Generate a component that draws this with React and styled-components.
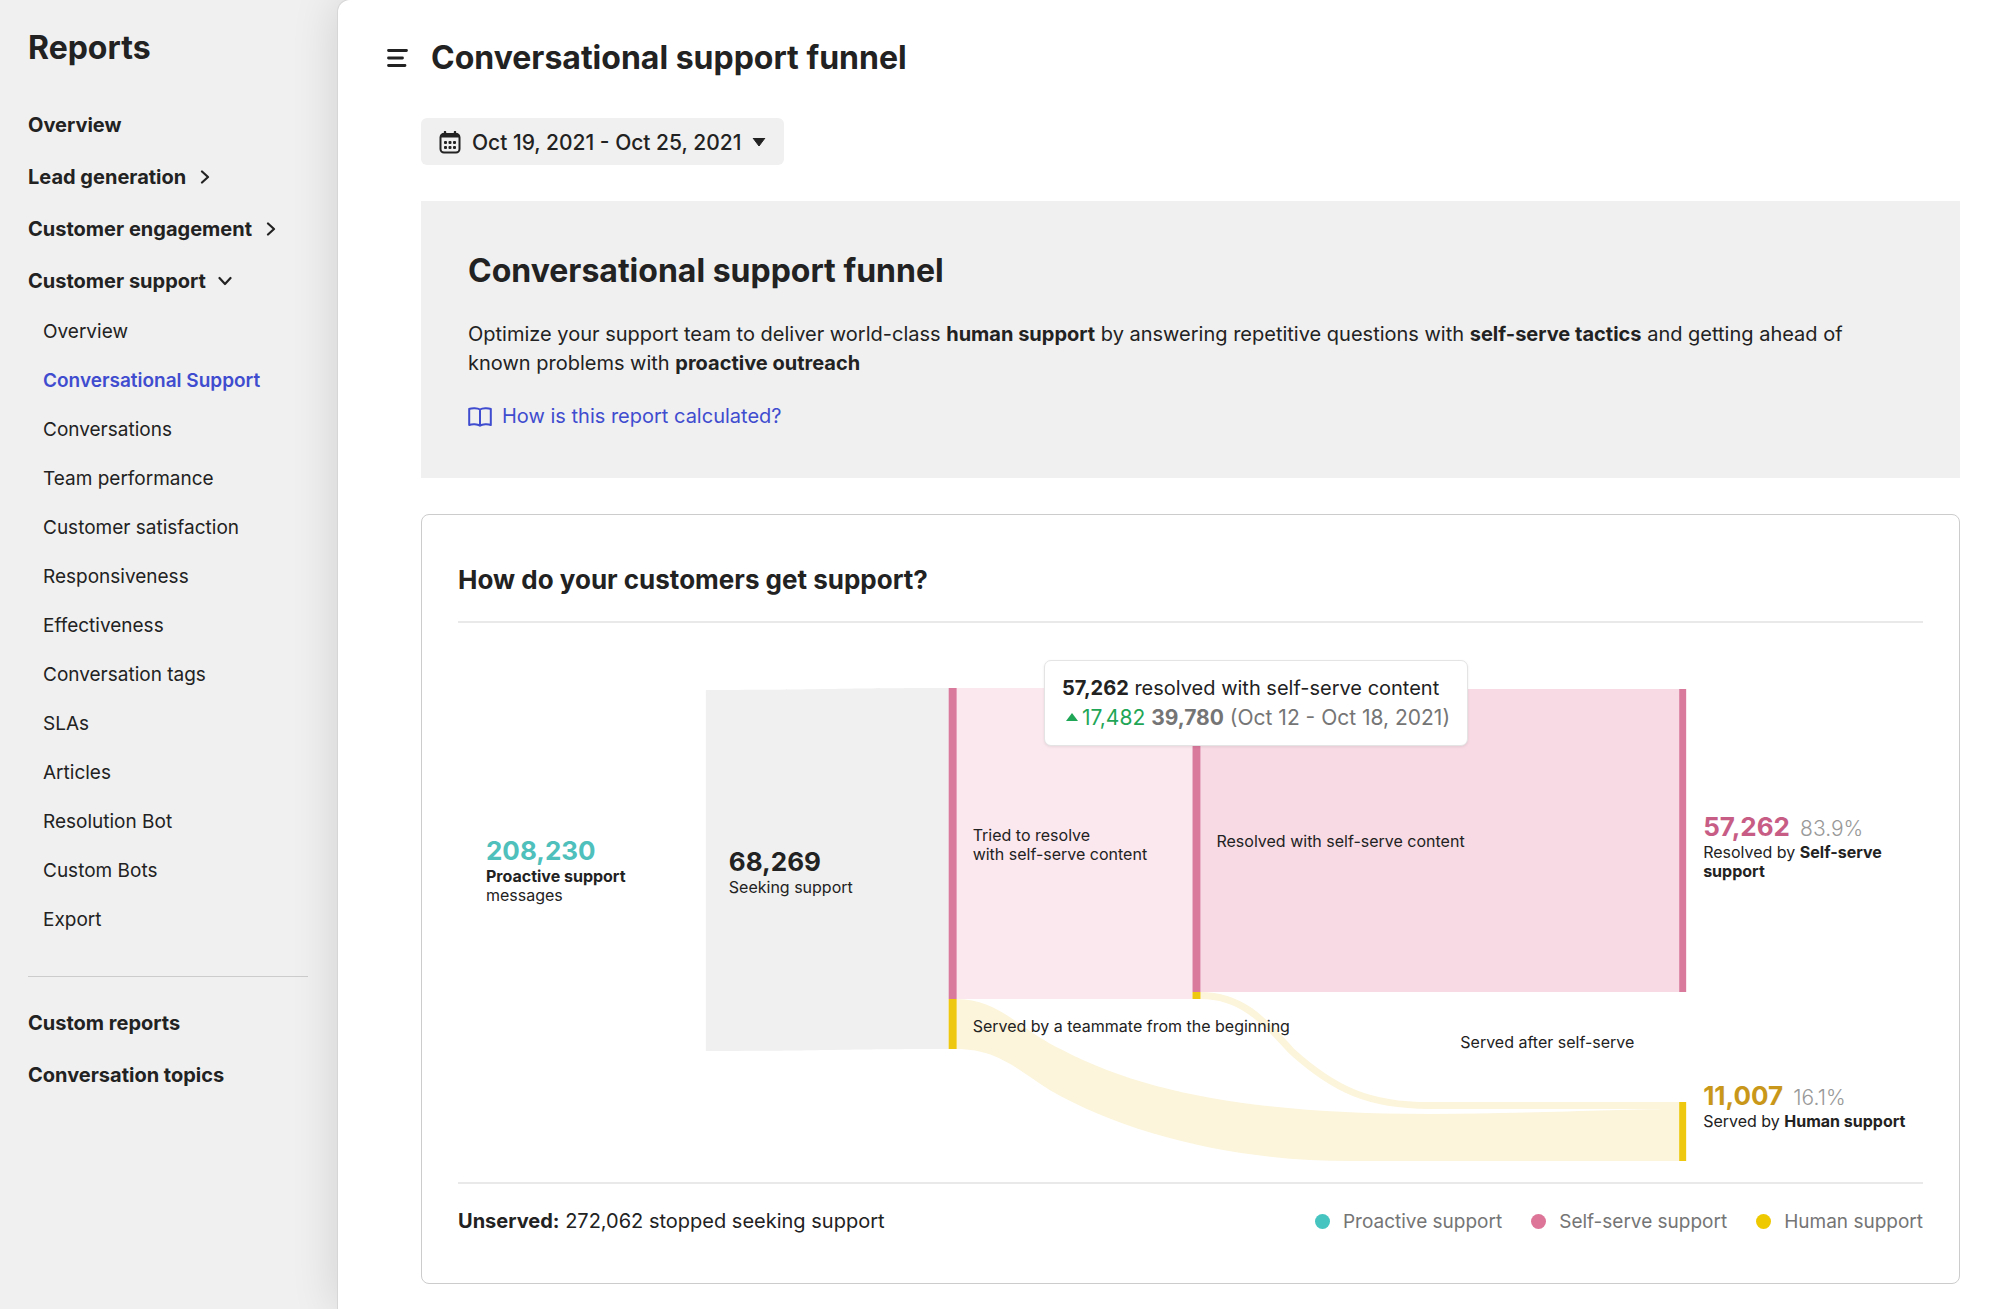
import React from 'react';
import styled, { createGlobalStyle } from 'styled-components';

const CHART_WIDTH = 1466;
const CHART_HEIGHT = 559;

const supportLinks = [
  'Overview',
  'Conversational Support',
  'Conversations',
  'Team performance',
  'Customer satisfaction',
  'Responsiveness',
  'Effectiveness',
  'Conversation tags',
  'SLAs',
  'Articles',
  'Resolution Bot',
  'Custom Bots',
  'Export',
];

const legend = [
  { label: 'Proactive support', color: '#45c4c0' },
  { label: 'Self-serve support', color: '#dd7599' },
  { label: 'Human support', color: '#eec900' },
];

const ChevronRight = () => (
  <svg width="10" height="14" viewBox="0 0 10 14" fill="none" aria-hidden="true">
    <path d="M2 1.5L8 7L2 12.5" stroke="currentColor" strokeWidth="2.2" strokeLinecap="round" strokeLinejoin="round" />
  </svg>
);

const ChevronDown = () => (
  <svg width="14" height="10" viewBox="0 0 14 10" fill="none" aria-hidden="true">
    <path d="M1.5 2L7 8L12.5 2" stroke="currentColor" strokeWidth="2.2" strokeLinecap="round" strokeLinejoin="round" />
  </svg>
);

const MenuIcon = () => (
  <svg width="21" height="20" viewBox="0 0 21 20" fill="none" aria-hidden="true">
    <path d="M1.5 2.5H19.5M1.5 10H15.5M1.5 17.5H18" stroke="currentColor" strokeWidth="2.8" strokeLinecap="round" />
  </svg>
);

const CalendarIcon = () => (
  <svg width="22" height="23" viewBox="0 0 22 23" fill="none" aria-hidden="true">
    <rect x="1.5" y="3" width="19" height="18.5" rx="3.5" stroke="currentColor" strokeWidth="2" />
    <path d="M1 6.5C1 3.5 2.5 2 5 2H17C19.500 2 21 3.500 21 6.500H1Z" fill="currentColor" />
    <path d="M6 1V3M16 1V3" stroke="currentColor" strokeWidth="2.4" strokeLinecap="round" />
    <g fill="currentColor">
      <rect x="5" y="10" width="3" height="3" rx="1" />
      <rect x="9.500" y="10" width="3" height="3" rx="1" />
      <rect x="14" y="10" width="3" height="3" rx="1" />
      <rect x="5" y="15" width="3" height="3" rx="1" />
      <rect x="9.500" y="15" width="3" height="3" rx="1" />
      <rect x="14" y="15" width="3" height="3" rx="1" />
    </g>
  </svg>
);

const BookIcon = () => (
  <svg width="24" height="20" viewBox="0 0 24 20" fill="none" aria-hidden="true">
    <path
      d="M12 2.500C9.500 1 4 0.800 1.200 2V18C4 16.800 9.500 17 12 18.700C14.500 17 20 16.800 22.800 18V2C20 0.800 14.500 1 12 2.500ZM12 2.500V18.500"
      stroke="currentColor"
      strokeWidth="2"
      strokeLinejoin="round"
    />
  </svg>
);

const FunnelDrawing = () => (
  <Drawing viewBox={`0 0 ${CHART_WIDTH} ${CHART_HEIGHT}`} preserveAspectRatio="none" aria-hidden="true">
    {/* links */}
    <path d="M248 67C370 67 370 65 491 65V426C370 426 370 428 248 428Z" fill="#f0f0f0" />
    <rect x="499" y="65" width="236" height="311" fill="#fbe7ee" />
    <rect x="743" y="66" width="479" height="303" fill="#f7dae4" />
    <path
      d="M499 376C542 376 562 407 605 427C692 473 812 491 972 491C1062 491 1162 486 1222 486V538H892C782 538 672 513 592 467C562 449 542 426 499 426Z"
      fill="#fcf5dc"
    />
    <path
      d="M743 372.500C787 372.500 810 402 834 428C877 467 912 482.500 972 482.500H1222"
      fill="none"
      stroke="#fcf5dc"
      strokeWidth="7"
    />
    {/* nodes */}
    <g fill="#d9799c">
      <rect x="491" y="65" width="8" height="311" />
      <rect x="735" y="65" width="8" height="304" />
      <rect x="1222" y="66" width="7" height="303" />
    </g>
    <g fill="#eec80e">
      <rect x="491" y="376" width="8" height="50" />
      <rect x="735" y="369" width="8" height="7" />
      <rect x="1222" y="479" width="7" height="59" />
    </g>
  </Drawing>
);

const Sidebar = () => (
  <StyledSidebar>
    <SidebarTitle>Reports</SidebarTitle>
    <nav>
      <SectionLink href="#overview">Overview</SectionLink>
      <SectionToggle type="button" $gap={14}>
        Lead generation <ChevronRight />
      </SectionToggle>
      <SectionToggle type="button" $gap={14}>
        Customer engagement <ChevronRight />
      </SectionToggle>
      <SectionToggle type="button" $gap={12}>
        Customer support <ChevronDown />
      </SectionToggle>
      <SubList>
        {supportLinks.map((label) => (
          <li key={label}>
            <SubLink href="#report" $active={label === 'Conversational Support'}>
              {label}
            </SubLink>
          </li>
        ))}
      </SubList>
      <SidebarDivider />
      <SectionLink href="#custom">Custom reports</SectionLink>
      <SectionLink href="#topics">Conversation topics</SectionLink>
    </nav>
  </StyledSidebar>
);

const Funnel = () => (
  <Chart>
    <FunnelDrawing />
    <ChartLabel $x={28} $y={212}>
      <Value $color="#4fc0bb">208,230</Value>
      <strong>Proactive support</strong>
      <br />
      messages
    </ChartLabel>
    <ChartLabel $x={271} $y={223}>
      <Value>68,269</Value>
      Seeking support
    </ChartLabel>
    <ChartLabel $x={515} $y={203}>
      Tried to resolve
      <br />
      with self-serve content
    </ChartLabel>
    <ChartLabel $x={759} $y={209}>
      Resolved with self-serve content
    </ChartLabel>
    <ChartLabel $x={515} $y={394}>
      Served by a teammate from the beginning
    </ChartLabel>
    <ChartLabel $x={1003} $y={410}>
      Served after self-serve
    </ChartLabel>
    <ChartLabel $x={1246} $y={188}>
      <Value $color="#c75c85">
        57,262 <Share>83.9%</Share>
      </Value>
      Resolved by <strong>Self-serve</strong>
      <br />
      <strong>support</strong>
    </ChartLabel>
    <ChartLabel $x={1246} $y={457}>
      <Value $color="#c9981a">
        11,007 <Share>16.1%</Share>
      </Value>
      Served by <strong>Human support</strong>
    </ChartLabel>
    <Tooltip role="tooltip">
      <div>
        <strong>57,262</strong> resolved with self-serve content
      </div>
      <Comparison>
        <Increase>
          <svg width="12" height="8" viewBox="0 0 12 8" aria-hidden="true">
            <path d="M6 0L12 8H0Z" fill="currentColor" />
          </svg>
          17,482
        </Increase>{' '}
        <strong>39,780</strong> (Oct 12 - Oct 18, 2021)
      </Comparison>
    </Tooltip>
  </Chart>
);

const App = () => (
  <>
    <GlobalStyle />
    <Layout>
      <Sidebar />
      <Main>
        <Header>
          <MenuButton type="button" aria-label="Toggle menu">
            <MenuIcon />
          </MenuButton>
          <PageTitle>Conversational support funnel</PageTitle>
        </Header>
        <Content>
          <DateButton type="button">
            <CalendarIcon />
            Oct 19, 2021 - Oct 25, 2021
            <svg width="14" height="8" viewBox="0 0 14 8" aria-hidden="true">
              <path d="M1 0H13L7 8Z" fill="currentColor" stroke="currentColor" strokeLinejoin="round" />
            </svg>
          </DateButton>
          <Banner>
            <BannerTitle>Conversational support funnel</BannerTitle>
            <BannerText>
              Optimize your support team to deliver world-class <strong>human support</strong> by answering repetitive
              questions with <strong>self-serve tactics</strong> and getting ahead of known problems with{' '}
              <strong>proactive outreach</strong>
            </BannerText>
            <HelpLink href="#help">
              <BookIcon />
              How is this report calculated?
            </HelpLink>
          </Banner>
          <Card>
            <CardTitle>How do your customers get support?</CardTitle>
            <Funnel />
            <CardFooter>
              <span>
                <strong>Unserved:</strong> 272,062 stopped seeking support
              </span>
              <Legend>
                {legend.map(({ label, color }) => (
                  <LegendItem key={label} $color={color}>
                    {label}
                  </LegendItem>
                ))}
              </Legend>
            </CardFooter>
          </Card>
        </Content>
      </Main>
    </Layout>
  </>
);

export default App;

const GlobalStyle = createGlobalStyle`
  * {
    box-sizing: border-box;
  }

  body {
    margin: 0;
    background: #f0f0f0;
    color: #222;
    font-family: Inter, 'Liberation Sans', sans-serif;
    font-size: 20px;
    line-height: 29px;
  }

  h1, h2, h3, p, ul {
    margin: 0;
    padding: 0;
  }

  strong {
    font-weight: 700;
  }

  button {
    border: none;
    background: none;
    padding: 0;
    color: inherit;
    font: inherit;
    cursor: pointer;
  }

  svg {
    flex: none;
  }
`;

const Layout = styled.div`
  display: flex;
  min-height: 100vh;
`;

const StyledSidebar = styled.aside`
  flex: none;
  width: 338px;
  padding: 28px 30px 0 28px;
`;

const SidebarTitle = styled.h2`
  margin-bottom: 31px;
  font-size: 32px;
  font-weight: 700;
  line-height: 40px;
`;

const SectionLink = styled.a`
  display: block;
  color: inherit;
  font-weight: 700;
  line-height: 52px;
  text-decoration: none;
`;

const SectionToggle = styled.button`
  display: flex;
  align-items: center;
  gap: ${({ $gap }) => $gap}px;
  font-weight: 700;
  line-height: 52px;
`;

const SubList = styled.ul`
  padding-left: 15px;
  list-style: none;
`;

const SubLink = styled.a`
  display: block;
  color: ${({ $active }) => ($active ? '#3f4ccf' : 'inherit')};
  font-size: 19px;
  font-weight: ${({ $active }) => ($active ? 600 : 400)};
  line-height: 49px;
  text-decoration: none;
`;

const SidebarDivider = styled.hr`
  margin: 32px 0 20px;
  border: none;
  border-top: 1px solid #ccc;
`;

const Main = styled.main`
  flex: 1;
  min-width: 0;
  padding: 38px 40px 25px 49px;
  border-radius: 12px 0 0 0;
  background: #fff;
  box-shadow: 0 0 0 1px #d6d6d6, 0 0 48px rgba(0, 0, 0, 0.14);
`;

const Header = styled.header`
  display: flex;
  align-items: center;
  gap: 23px;
  margin-bottom: 40px;
`;

const MenuButton = styled.button`
  display: flex;
`;

const PageTitle = styled.h1`
  font-size: 32px;
  font-weight: 700;
  line-height: 40px;
`;

const Content = styled.div`
  padding-left: 34px;
`;

const DateButton = styled.button`
  display: flex;
  align-items: center;
  gap: 11px;
  height: 47px;
  padding: 1px 18px 0;
  border-radius: 6px;
  background: #f0f0f0;
  font-size: 21px;
  font-weight: 500;
`;

const Banner = styled.section`
  margin-top: 36px;
  padding: 50px 72px 47px 47px;
  background: #f0f0f0;
`;

const BannerTitle = styled.h2`
  margin-bottom: 29px;
  font-size: 32px;
  font-weight: 700;
  line-height: 40px;
`;

const BannerText = styled.p`
  margin-bottom: 24px;
`;

const HelpLink = styled.a`
  display: inline-flex;
  align-items: center;
  gap: 10px;
  color: #3f4ccf;
  text-decoration: none;
  vertical-align: top;
`;

const Card = styled.section`
  margin-top: 36px;
  padding: 48px 36px 47px;
  border: 1px solid #ccc;
  border-radius: 8px;
`;

const CardTitle = styled.h3`
  padding-bottom: 24px;
  border-bottom: 2px solid #e9e9e9;
  font-size: 26px;
  font-weight: 700;
  line-height: 34px;
`;

const Chart = styled.div`
  position: relative;
  height: ${CHART_HEIGHT}px;
`;

const Drawing = styled.svg`
  display: block;
  width: 100%;
  height: 100%;
`;

const ChartLabel = styled.div`
  position: absolute;
  left: ${({ $x }) => ($x / CHART_WIDTH) * 100}%;
  top: ${({ $y }) => $y}px;
  font-size: 16px;
  line-height: 19px;
  white-space: nowrap;
`;

const Value = styled.div`
  color: ${({ $color }) => $color || 'inherit'};
  font-size: 26px;
  font-weight: 700;
  line-height: 32px;
`;

const Share = styled.span`
  margin-left: 4px;
  color: #999;
  font-size: 21px;
  font-weight: 300;
  line-height: 20px;
`;

const Tooltip = styled.div`
  position: absolute;
  left: 40%;
  top: 37px;
  padding: 13px 17px;
  border: 1px solid #e4e4e4;
  border-radius: 7px;
  background: #fff;
  box-shadow: 0 1px 3px rgba(0, 0, 0, 0.08);
  white-space: nowrap;
`;

const Comparison = styled.div`
  color: #757575;
  font-size: 21px;
`;

const Increase = styled.span`
  padding-left: 4px;
  color: #1fa656;

  svg {
    margin-right: 4px;
    vertical-align: 4px;
  }
`;

const CardFooter = styled.footer`
  display: flex;
  justify-content: space-between;
  padding-top: 23px;
  border-top: 2px solid #e9e9e9;
`;

const Legend = styled.ul`
  display: flex;
  gap: 29px;
  color: #757575;
  font-size: 19px;
  list-style: none;
`;

const LegendItem = styled.li`
  display: flex;
  align-items: center;
  gap: 13px;

  &::before {
    content: '';
    width: 15px;
    height: 15px;
    border-radius: 50%;
    background: ${({ $color }) => $color};
  }
`;
